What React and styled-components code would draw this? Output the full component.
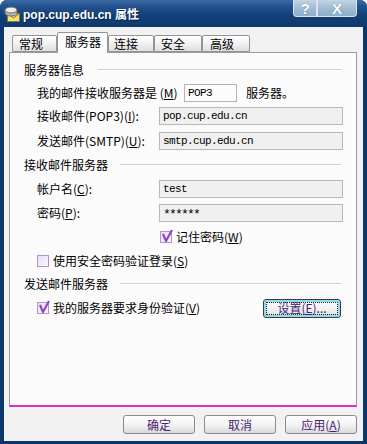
import React from "react";
import styled, { createGlobalStyle } from "styled-components";

const Global = createGlobalStyle`
  html, body { margin: 0; padding: 0; background: #ffffff; }
  * { box-sizing: border-box; }
`;

const UI = `"Noto Sans CJK SC", "Liberation Sans", sans-serif`;
const MONO = `"Liberation Mono", "Noto Sans CJK SC", monospace`;

const Window = styled.div`
  width: 367px;
  height: 444px;
  display: flex;
  flex-direction: column;
  background: #0c376a;
  border-radius: 7px 7px 0 0;
  overflow: hidden;
  font-family: ${UI};
  font-size: 12px;
  color: #000;
`;

const TitleBar = styled.div`
  height: 27px;
  flex: none;
  display: flex;
  align-items: flex-start;
  padding-left: 4px;
  background: linear-gradient(#3c6aa6 0%, #21508c 25%, #133f78 60%, #0e3a70 100%);
`;

const TitleIcon = styled.svg`
  margin-top: 5px;
  flex: none;
`;

const TitleText = styled.div`
  margin-top: 8px;
  margin-left: 2px;
  font-family: "Liberation Sans", "Noto Sans CJK SC", sans-serif;
  font-weight: bold;
  font-size: 12px;
  line-height: 14px;
  color: #ffffff;
  text-shadow: 1px 1px 0 #0a2448;
`;

const CaptionButtons = styled.div`
  margin-left: auto;
  margin-right: 10px;
  display: flex;
`;

const CaptionButton = styled.div`
  width: ${(p) => p.$w}px;
  height: 17px;
  display: flex;
  align-items: center;
  justify-content: center;
  color: #ffffff;
  font-family: "Liberation Sans", sans-serif;
  font-weight: bold;
  font-size: 15px;
  text-shadow: 0 0 1px #4a6a8a;
  background: linear-gradient(#c2d4e4, #9cb8d2 60%, #8eaecb);
  border: 1px solid #d8e4ef;
  border-top: none;
  border-radius: ${(p) => p.$r};
`;

const Frame = styled.div`
  flex: 1;
  display: flex;
  padding: 0 4px 3px 4px;
`;

const Client = styled.div`
  flex: 1;
  display: flex;
  flex-direction: column;
  background: #f2f2f2;
  padding: 5px 6px 7px 5px;
`;

const TabStrip = styled.div`
  height: 20px;
  display: flex;
  align-items: flex-end;
  padding-left: 3px;
  position: relative;
  z-index: 1;
`;

const Tab = styled.div`
  width: ${(p) => p.$w}px;
  height: ${(p) => (p.$active ? 21 : 17)}px;
  margin-bottom: ${(p) => (p.$active ? -1 : 0)}px;
  border: 1px solid #949494;
  border-bottom: ${(p) => (p.$active ? "none" : "1px solid #949494")};
  border-radius: 2px 2px 0 0;
  background: ${(p) =>
    p.$active ? "#fbfbfb" : "linear-gradient(#ffffff, #f2f2f2 50%, #dedede)"};
  display: flex;
  align-items: ${(p) => (p.$active ? "flex-start" : "center")};
  padding-top: ${(p) => (p.$active ? 2 : 0)}px;
  padding-left: ${(p) => p.$pl}px;
  line-height: 14px;
  font-size: 12px;
`;

const Panel = styled.div`
  height: 355px;
  background: #fbfbfb;
  border: 1px solid #9a9a9a;
  border-bottom: 2px solid #d92ed0;
  padding: 5px 13px 0 14px;
  display: flex;
  flex-direction: column;
`;

const Row = styled.div`
  height: ${(p) => p.$h}px;
  display: flex;
  align-items: center;
  padding-left: ${(p) => p.$indent || 0}px;
  line-height: 14px;
`;

const HeaderLine = styled.div`
  flex: 1;
  margin-left: ${(p) => p.$gap}px;
  margin-right: 2px;
  height: 2px;
  border-top: 1px solid #d0d0d0;
  border-bottom: 1px solid #ffffff;
`;

const Label = styled.div`
  width: ${(p) => p.$w}px;
  flex: none;
  white-space: nowrap;
`;

const Field = styled.div`
  width: ${(p) => p.$w}px;
  height: 18px;
  flex: none;
  border: 1px solid ${(p) => (p.$editable ? "#b4b4b4" : "#b8b8b8")};
  background: ${(p) => (p.$editable ? "#fcfcfc" : "#f0f0f0")};
  font-family: ${MONO};
  font-size: ${(p) => (p.$secret ? 13 : 11)}px;
  letter-spacing: ${(p) => (p.$secret ? -1.8 : -0.6)}px;
  line-height: ${(p) => (p.$secret ? 20 : 16)}px;
  padding-left: 3px;
  color: #000;
  white-space: nowrap;
`;

const After = styled.div`
  margin-left: 9px;
`;

const Box = styled.div`
  width: 12px;
  height: 12px;
  flex: none;
  margin-left: ${(p) => p.$ml || 0}px;
  margin-right: 4px;
  border: 1px solid #b294d0;
  background: linear-gradient(135deg, #e8def2, #faf6fd);
  position: relative;
`;

const Check = styled.svg`
  position: absolute;
  left: -1px;
  top: -3px;
`;

const SettingsButton = styled.div`
  margin-left: auto;
  margin-right: 2px;
  width: 78px;
  height: 19px;
  border: 1px solid #3c3c3c;
  border-radius: 3px;
  box-shadow: inset 0 0 0 2px #8fdcf2;
  background: linear-gradient(#ffffff, #f0f0f0 55%, #dcdcdc);
  display: flex;
  align-items: center;
  justify-content: center;
  padding: 2px;
  color: #4a2370;
`;

const FocusRect = styled.div`
  flex: 1;
  align-self: stretch;
  border: 1px dotted #202020;
  display: flex;
  align-items: center;
  justify-content: center;
  line-height: 12px;
`;

const ButtonBar = styled.div`
  margin-top: 8px;
  display: flex;
  justify-content: flex-end;
  gap: 9px;
`;

const DlgButton = styled.div`
  width: 72px;
  height: 19px;
  border: 1px solid #8a8a8a;
  border-radius: 3px;
  background: linear-gradient(#ffffff, #f2f2f2 55%, #dadada);
  display: flex;
  align-items: center;
  justify-content: center;
  color: #4a2370;
  line-height: 14px;
`;

const Acc = ({ k }) => (
  <span>
    (<u>{k}</u>)
  </span>
);

const CheckBox = ({ checked, ml }) => (
  <Box $ml={ml}>
    {checked && (
      <Check width="14" height="15" viewBox="0 0 14 15">
        <path
          d="M3 5 L6 12 L12 1"
          fill="none"
          stroke="#9048c0"
          strokeWidth="2.2"
          strokeLinejoin="round"
        />
      </Check>
    )}
  </Box>
);

const Header = ({ children, gap }) => (
  <Row $h={24}>
    <span>{children}</span>
    <HeaderLine $gap={gap} />
  </Row>
);

export default function App() {
  return (
    <>
      <Global />
      <Window>
        <TitleBar>
          <TitleIcon width="17" height="17" viewBox="0 0 17 17">
            <rect x="3.5" y="8.5" width="12" height="8" fill="#f6e27a" stroke="#8a7a30" />
            <path d="M3.5 8.5 L9.5 13 L15.5 8.5" fill="none" stroke="#8a7a30" />
            <path d="M1 5 V8 A6 3 0 0 0 13 8 V5" fill="#b8b8b8" stroke="#6a6a6a" />
            <ellipse cx="7" cy="5" rx="6" ry="3" fill="#ececec" stroke="#6a6a6a" />
          </TitleIcon>
          <TitleText>pop.cup.edu.cn 属性</TitleText>
          <CaptionButtons>
            <CaptionButton $w={24} $r="0 0 0 4px">?</CaptionButton>
            <CaptionButton $w={40} $r="0 0 4px 0">X</CaptionButton>
          </CaptionButtons>
        </TitleBar>
        <Frame>
          <Client>
            <TabStrip>
              <Tab $w={45} $pl={6}>常规</Tab>
              <Tab $w={51} $pl={7} $active>服务器</Tab>
              <Tab $w={46} $pl={5}>连接</Tab>
              <Tab $w={48} $pl={6}>安全</Tab>
              <Tab $w={48} $pl={7}>高级</Tab>
            </TabStrip>
            <Panel>
              <Header gap={14}>服务器信息</Header>
              <Row $h={22} $indent={13}>
                <Label $w={147}>
                  我的邮件接收服务器是 <Acc k="M" />
                </Label>
                <Field $w={53} $editable>POP3</Field>
                <After>服务器。</After>
              </Row>
              <Row $h={24} $indent={13}>
                <Label $w={122}>
                  接收邮件(POP3)<Acc k="I" />:
                </Label>
                <Field $w={184}>pop.cup.edu.cn</Field>
              </Row>
              <Row $h={25} $indent={13}>
                <Label $w={122}>
                  发送邮件(SMTP)<Acc k="U" />:
                </Label>
                <Field $w={184}>smtp.cup.edu.cn</Field>
              </Row>
              <Header gap={12}>接收邮件服务器</Header>
              <Row $h={24} $indent={13}>
                <Label $w={122}>
                  帐户名<Acc k="C" />:
                </Label>
                <Field $w={184}>test</Field>
              </Row>
              <Row $h={23} $indent={13}>
                <Label $w={122}>
                  密码<Acc k="P" />:
                </Label>
                <Field $w={184} $secret>******</Field>
              </Row>
              <Row $h={25} $indent={13}>
                <CheckBox checked ml={123} />
                <span>
                  记住密码<Acc k="W" />
                </span>
              </Row>
              <Row $h={23} $indent={13}>
                <CheckBox />
                <span>
                  使用安全密码验证登录<Acc k="S" />
                </span>
              </Row>
              <Header gap={12}>发送邮件服务器</Header>
              <Row $h={24} $indent={13}>
                <CheckBox checked />
                <span>
                  我的服务器要求身份验证<Acc k="V" />
                </span>
                <SettingsButton>
                  <FocusRect>
                    设置<Acc k="E" />...
                  </FocusRect>
                </SettingsButton>
              </Row>
            </Panel>
            <ButtonBar>
              <DlgButton>确定</DlgButton>
              <DlgButton>取消</DlgButton>
              <DlgButton>
                应用<Acc k="A" />
              </DlgButton>
            </ButtonBar>
          </Client>
        </Frame>
      </Window>
    </>
  );
}
